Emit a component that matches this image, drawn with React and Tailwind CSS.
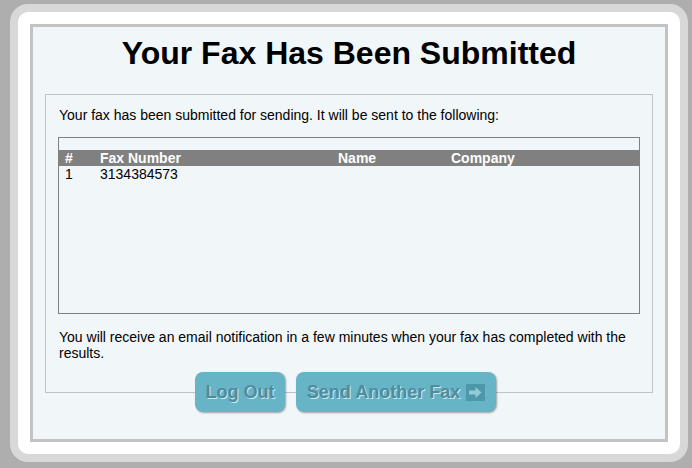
import React from 'react';

const rows = [{ id: 1, number: '3134384573', name: '', company: '' }];

const ArrowIcon = () => (
  <span className="inline-flex items-center justify-center w-[19px] h-[17px] bg-[#4e97a9] ml-[6px]">
    <svg width="15" height="13" viewBox="0 0 15 13">
      <path d="M1 4.5h6.5V1l6 5.5-6 5.5V8.5H1z" fill="#93cbd8" />
    </svg>
  </span>
);

const Button = ({ width, children }) => (
  <button
    className={`relative flex items-center justify-center h-[40px] ${width} rounded-[8px] bg-[#67b4c6] text-[18px] font-bold text-[#4f8c9d] [text-shadow:1px_1px_0_rgba(230,245,250,0.8)] shadow-[1px_1px_2px_rgba(0,0,0,0.35)]`}
  >
    {children}
  </button>
);

export default function App() {
  return (
    <div className="min-h-[468px] bg-[#aeaeae] pt-[4px] px-[4px] pb-[8px] font-['Liberation_Sans',Arial,sans-serif] text-black">
      <div className="ml-[6px] w-[678px] rounded-[18px] border-[8px] border-[#d8d8d8] bg-white p-[12px]">
        <div className="border-[3px] border-[#c3c3c3] bg-[#f1f6f9] pb-[27px]">
          <h1 className="mt-[8px] text-center text-[32px] leading-[36px] font-bold">
            Your Fax Has Been Submitted
          </h1>

          <div className="mx-[12px] mt-[23px] border border-[#c2c2c2] pt-[12px] pl-[12px] pr-[12px] pb-[31px] text-[14px] leading-[16px]">
            <p className="pl-[1px]">
              Your fax has been submitted for sending. It will be sent to the following:
            </p>

            <div className="mt-[14px] h-[177px] border border-[#808080] pt-[12px]">
              <table className="w-full border-collapse text-left text-[14px] leading-[16px]">
                <thead>
                  <tr className="bg-[#808080] text-white">
                    <th className="w-[41px] pl-[6px] font-bold">#</th>
                    <th className="w-[238px] font-bold">Fax Number</th>
                    <th className="w-[113px] font-bold">Name</th>
                    <th className="font-bold">Company</th>
                  </tr>
                </thead>
                <tbody>
                  {rows.map((r) => (
                    <tr key={r.id}>
                      <td className="pl-[6px]">{r.id}</td>
                      <td>{r.number}</td>
                      <td>{r.name}</td>
                      <td>{r.company}</td>
                    </tr>
                  ))}
                </tbody>
              </table>
            </div>

            <p className="mt-[15px] pl-[1px]">
              You will receive an email notification in a few minutes when your fax has completed with the results.
            </p>
          </div>

          <div className="relative mt-[-21px] flex justify-center gap-[11px] pr-[7px]">
            <Button width="w-[90px]">Log Out</Button>
            <Button width="w-[200px]">
              Send Another Fax
              <ArrowIcon />
            </Button>
          </div>
        </div>
      </div>
    </div>
  );
}
